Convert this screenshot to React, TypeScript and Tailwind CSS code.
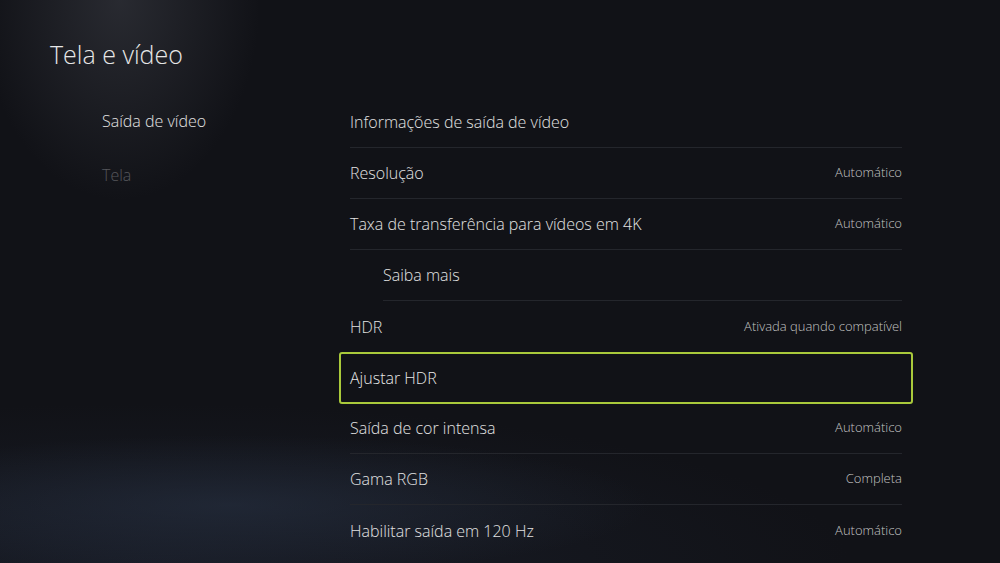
import React from 'react';

type Row = {
  label: string;
  value?: string;
  indent?: boolean;
  focused?: boolean;
};

const rows: Row[] = [
  { label: 'Informações de saída de vídeo' },
  { label: 'Resolução', value: 'Automático' },
  { label: 'Taxa de transferência para vídeos em 4K', value: 'Automático' },
  { label: 'Saiba mais', indent: true },
  { label: 'HDR', value: 'Ativada quando compatível' },
  { label: 'Ajustar HDR', focused: true },
  { label: 'Saída de cor intensa', value: 'Automático' },
  { label: 'Gama RGB', value: 'Completa' },
  { label: 'Habilitar saída em 120 Hz', value: 'Automático' },
];

const SettingRow: React.FC<{ row: Row; hideLine: boolean }> = ({ row, hideLine }) => {
  if (row.focused) {
    return (
      <div className="h-[52px] -mb-px flex items-center px-[9px] border-2 border-[#a9c93b] rounded-[3px]">
        <span className="text-[16px] font-light text-[#e8e8e8]">{row.label}</span>
      </div>
    );
  }
  return (
    <div className="h-[51px] px-[11px]">
      <div
        className={`h-full flex items-center justify-between ${hideLine ? '' : 'border-b border-[#24262c]'} ${row.indent ? 'ml-[33px]' : ''}`}
      >
        <span className="text-[16px] font-light text-[#e2e2e2]">{row.label}</span>
        {row.value && <span className="text-[13px] font-light text-[#c2c2c2]">{row.value}</span>}
      </div>
    </div>
  );
};

export default function App() {
  return (
    <div
      className="w-[1000px] h-[563px] overflow-hidden text-white bg-[#111217] bg-[image:radial-gradient(ellipse_140px_200px_at_120px_0px,rgba(60,62,70,0.55),transparent),radial-gradient(ellipse_420px_70px_at_230px_505px,rgba(40,50,68,0.55),transparent),radial-gradient(ellipse_700px_160px_at_150px_563px,rgba(30,36,50,0.6),transparent)]"
      style={{ fontFamily: '"Open Sans", "Noto Sans", sans-serif' }}
    >
      {/* Header */}
      <div className="pl-[50px] pt-[37px] h-[97px]">
        <h1 className="text-[25px] font-light leading-[34px] text-[#e6e6e6]">Tela e vídeo</h1>
      </div>

      <div className="flex">
        {/* Side menu */}
        <nav className="w-[339px] pl-[102px] -mt-[3px]">
          <div className="h-[54px] flex items-center text-[16px] font-light text-[#e2e2e2]">Saída de vídeo</div>
          <div className="h-[54px] flex items-center text-[16px] font-light text-[#56575c]">Tela</div>
        </nav>

        {/* Settings list */}
        <div className="w-[574px] flex flex-col">
          {rows.map((row, i) => (
            <SettingRow
              key={row.label}
              row={row}
              hideLine={!!rows[i + 1]?.focused || i === rows.length - 1}
            />
          ))}
        </div>
      </div>
    </div>
  );
}
